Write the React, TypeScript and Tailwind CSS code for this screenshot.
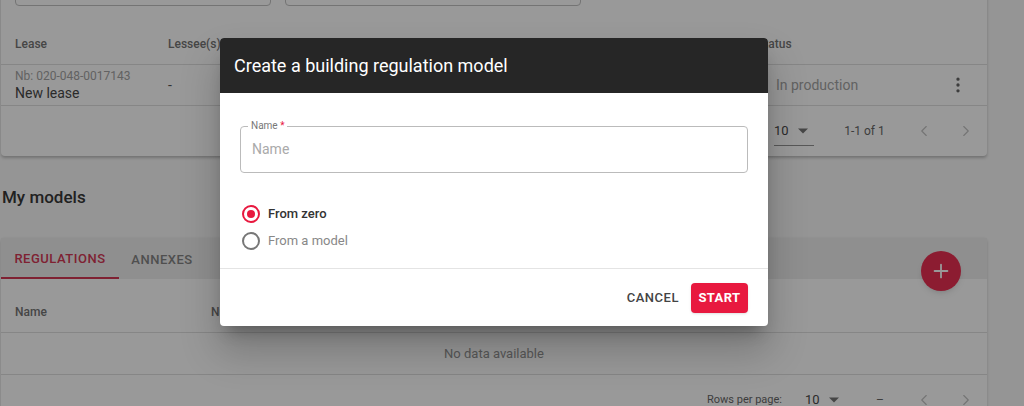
import { ChevronLeft, ChevronRight, EllipsisVertical, Plus } from "lucide-react";

const font = { fontFamily: "Roboto, 'Liberation Sans', sans-serif" };

function Caret() {
  return (
    <svg width="10" height="6" viewBox="0 0 10 5" className="fill-[#666]">
      <path d="M0 0 L10 0 L5 5 Z" />
    </svg>
  );
}

function Pager({ showRows, range, rangeW }: { showRows?: boolean; range: string; rangeW: string }) {
  return (
    <div className="flex items-center h-full text-[12px] text-[#555]">
      {showRows && <span className="w-[98px] text-[11px]">Rows per page:</span>}
      <div className="flex items-center w-[40px] justify-between border-b border-[#888] h-[30px] pr-[6px]">
        <span className="text-[13px] text-[#333]">10</span>
        <Caret />
      </div>
      <span className={`${rangeW} text-center text-[12px]`}>{range}</span>
      <ChevronLeft size={18} strokeWidth={1.5} className="text-[#bbb]" />
      <span className="w-[24px]" />
      <ChevronRight size={18} strokeWidth={1.5} className="text-[#bbb]" />
    </div>
  );
}

export default function App() {
  return (
    <div className="relative w-[1024px] h-[406px] overflow-hidden bg-[#f7f7f7]" style={font}>
      <div className="w-[986px] ml-[1px]">
        {/* leases card */}
        <div className="bg-white rounded-b shadow-[0_2px_3px_rgba(0,0,0,0.25)] -mt-[40px]">
          <div className="flex gap-[14px] pl-[14px] pt-[2px] h-[64px]">
            <div className="w-[256px] h-[44px] border border-[#bbb] rounded" />
            <div className="w-[296px] h-[44px] border border-[#bbb] rounded" />
          </div>
          <div className="flex items-center h-[41px] border-b border-[#ddd] text-[12px] font-medium text-[#666]">
            <span className="pl-[14px] w-[167px]">Lease</span>
            <span className="w-[589px]">Lessee(s)</span>
            <span>Status</span>
          </div>
          <div className="flex items-center h-[41px] border-b border-[#ddd]">
            <div className="pl-[14px] w-[167px] flex flex-col">
              <span className="text-[12px] text-[#999] leading-[16px]">Nb: 020-048-0017143</span>
              <span className="text-[14px] text-[#333] leading-[18px]">New lease</span>
            </div>
            <span className="w-[608px] text-[14px] text-[#444]">-</span>
            <span className="text-[14px] text-[#999]">In production</span>
            <EllipsisVertical size={20} className="ml-auto mr-[19px] text-[#555]" />
          </div>
          <div className="flex justify-end h-[50px] pr-[12px]">
            <Pager range="1-1 of 1" rangeW="w-[101px]" />
          </div>
        </div>

        <h2 className="mt-[30px] h-[22px] text-[17px] font-medium text-[#222] leading-[22px] pl-[1px]">My models</h2>

        {/* models card */}
        <div className="relative mt-[30px] bg-white rounded-t shadow-[0_1px_3px_rgba(0,0,0,0.2)]">
          <div className="flex h-[41px] bg-[#ececec] text-[13px] font-medium tracking-[0.04em]">
            <div className="w-[118px] flex items-center justify-center text-[#cf2242] border-b-2 border-[#cf2242] pt-[2px]">
              REGULATIONS
            </div>
            <div className="w-[86px] flex items-center justify-center text-[#777] pt-[2px]">ANNEXES</div>
          </div>
          <button className="absolute left-[920px] top-[13px] w-[40px] h-[40px] rounded-full bg-[#e8193f] flex items-center justify-center shadow-md">
            <Plus size={22} strokeWidth={2} className="text-white" />
          </button>
          <div className="flex items-center h-[54px] border-b border-[#ddd] text-[12px] font-medium text-[#666] pt-[13px]">
            <span className="pl-[14px] w-[210px]">Name</span>
            <span>Number</span>
          </div>
          <div className="flex items-center justify-center h-[42px] border-b border-[#ddd] text-[13px] text-[#888]">
            No data available
          </div>
          <div className="flex justify-end h-[50px] pr-[12px]">
            <Pager showRows range="–" rangeW="w-[70px]" />
          </div>
        </div>
      </div>

      {/* overlay */}
      <div className="absolute inset-0 bg-[rgba(33,33,33,0.46)]" />

      {/* dialog */}
      <div className="absolute left-[220px] top-[38px] w-[548px] rounded overflow-hidden bg-white shadow-[0_11px_15px_-7px_rgba(0,0,0,0.3),0_24px_38px_3px_rgba(0,0,0,0.2)]">
        <div className="h-[55px] bg-[#262626] flex items-center px-[14px] text-[18px] text-white">
          Create a building regulation model
        </div>
        <div className="px-[20px] pt-[33px] pb-[18px]">
          <div className="relative h-[47px] border border-[#bbb] rounded flex items-center px-[11px]">
            <span className="absolute -top-[7px] left-[7px] bg-white px-[3px] text-[10px] leading-[12px] text-[#777]">
              Name <span className="text-[#e8193f]">*</span>
            </span>
            <span className="text-[14px] text-[#aaa]">Name</span>
          </div>
          <div className="mt-[32px] flex flex-col gap-[9px] pl-[2px]">
            <label className="flex items-center gap-[8px] h-[18px]">
              <span className="w-[18px] h-[18px] rounded-full border-2 border-[#e8193f] flex items-center justify-center">
                <span className="w-[8px] h-[8px] rounded-full bg-[#e8193f]" />
              </span>
              <span className="text-[13px] font-medium text-[#333]">From zero</span>
            </label>
            <label className="flex items-center gap-[8px] h-[18px]">
              <span className="w-[18px] h-[18px] rounded-full border-2 border-[#777]" />
              <span className="text-[13px] text-[#888]">From a model</span>
            </label>
          </div>
        </div>
        <div className="border-t border-[#e4e4e4] h-[58px] flex items-center justify-end gap-[12px] px-[20px]">
          <button className="text-[13px] font-medium tracking-[0.04em] text-[#444] h-[30px]">CANCEL</button>
          <button className="h-[30px] w-[57px] rounded bg-[#e8193f] text-white text-[13px] font-bold tracking-[0.03em] shadow">
            START
          </button>
        </div>
      </div>
    </div>
  );
}
